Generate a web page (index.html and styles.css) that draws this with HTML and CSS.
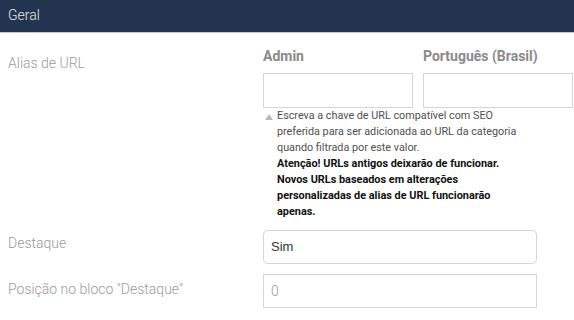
FILE: index.html
```
<!DOCTYPE html>
<html>
<head>
    <title>Geral</title>
    <link rel="stylesheet" href="styles.css">
</head>
<body>
<div class="panel-heading">Geral</div>

<div class="form">
    <div class="form-row">
        <label class="form-label first">Alias de URL</label>
        <div class="form-control">
            <div class="langs">
                <div class="lang">
                    <div class="lang-name">Admin</div>
                    <input type="text" class="text-input">
                </div>
                <div class="lang">
                    <div class="lang-name">Português (Brasil)</div>
                    <input type="text" class="text-input">
                </div>
            </div>
            <div class="help">
                <span class="help-arrow"></span>
                <div>Escreva a chave de URL compatível com SEO preferida para ser adicionada ao URL da categoria quando filtrada por este valor.</div>
                <div class="help-warning">Atenção! URLs antigos deixarão de funcionar. Novos URLs baseados em alterações personalizadas de alias de URL funcionarão apenas.</div>
            </div>
        </div>
    </div>

    <div class="form-row">
        <label class="form-label">Destaque</label>
        <div class="form-control">
            <div class="select-box">Sim</div>
        </div>
    </div>

    <div class="form-row">
        <label class="form-label last">Posição no bloco "Destaque"</label>
        <div class="form-control">
            <input type="text" class="text-input wide" value="0">
        </div>
    </div>
</div>
</body>
</html>
```

FILE: styles.css
```
body {
    margin: 0;
    background-color: #fff;
    font-family: 'Roboto', 'Liberation Sans', sans-serif;
    overflow: hidden;
}
.panel-heading {
    background-color: #22344f;
    color: #e3e8ee;
    font-size: 14px;
    font-weight: 300;
    height: 32px;
    line-height: 30px;
    padding-left: 8px;
    border-bottom: 1px solid #c9c9c9;
}
.form {
    padding-top: 13px;
}
.form-row {
    display: grid;
    grid-template-columns: 263px 274px;
    margin-bottom: 10px;
}
.form-label {
    padding-left: 8px;
    padding-top: 3px;
    font-size: 14px;
    font-weight: 300;
    line-height: 20px;
    color: #9a9a9a;
}
.form-label.first {
    padding-top: 7px;
}
.form-label.last {
    padding-top: 5px;
}
.langs {
    display: flex;
    gap: 10px;
    width: 310px;
}
.lang-name {
    font-size: 14px;
    font-weight: bold;
    color: #8a8a8a;
    line-height: 20px;
    margin-bottom: 7px;
}
.text-input {
    box-sizing: border-box;
    display: block;
    width: 150px;
    height: 35px;
    border: 1px solid #d4d4d4;
    border-radius: 0;
    margin: 0;
    padding: 0 7px;
    font-family: 'Roboto', sans-serif;
    font-weight: 300;
    font-size: 14px;
    color: #9a9a9a;
    outline: none;
}
.text-input.wide {
    width: 274px;
    height: 34px;
}
.help {
    position: relative;
    padding-left: 14px;
    padding-right: 12px;
    font-size: 10.8px;
    line-height: 16px;
    color: #505050;
}
.help-warning {
    font-weight: bold;
    font-size: 10.9px;
    color: #111;
}
.help-arrow {
    position: absolute;
    left: 2px;
    top: 6px;
    width: 0;
    height: 0;
    border-left: 4px solid transparent;
    border-right: 4px solid transparent;
    border-bottom: 6px solid #b4b9bf;
}
.select-box {
    box-sizing: border-box;
    height: 34px;
    border: 1px solid #d4d4d4;
    border-radius: 5px;
    padding: 0 7px;
    line-height: 32px;
    font-family: 'Liberation Sans', Arial, sans-serif;
    font-size: 13px;
    color: #333;
}
```
